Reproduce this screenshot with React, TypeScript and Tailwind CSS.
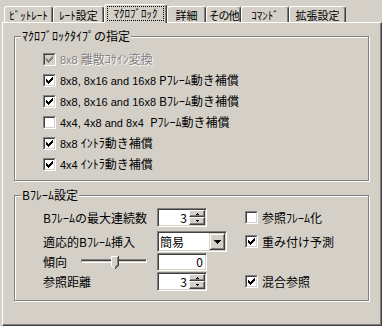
import type { ReactNode } from "react"

// classic win32 property sheet: tabs + two group boxes

const tabs = [
  { label: "ﾋﾞｯﾄﾚｰﾄ", cls: "w-[49px]" },
  { label: "ﾚｰﾄ設定", cls: "w-[51px]" },
  { label: "ﾏｸﾛﾌﾞﾛｯｸ", cls: "w-[63px]", active: true },
  { label: "詳細", cls: "w-[39px]" },
  { label: "その他", cls: "w-[35px] tracking-[-1px]" },
  { label: "ｺﾏﾝﾄﾞ", cls: "w-[48px]" },
  { label: "拡張設定", cls: "w-[57px]" },
]

function Lat({ children }: { children: ReactNode }) {
  return <span className="font-['Liberation_Sans',sans-serif] text-[11px]">{children}</span>
}

function CheckMark({ color }: { color: string }) {
  return (
    <svg width="7" height="7" viewBox="0 0 7 7" shapeRendering="crispEdges" fill={color}>
      <path d="M0 2h1v3H0zM1 3h1v3H1zM2 4h1v3H2zM3 3h1v3H3zM4 2h1v3H4zM5 1h1v3H5zM6 0h1v3H6z" />
    </svg>
  )
}

function CheckBox({ checked, disabled }: { checked?: boolean; disabled?: boolean }) {
  return (
    <span className="flex h-[13px] w-[13px] shrink-0 border border-t-[#808080] border-l-[#808080] border-r-white border-b-white">
      <span
        className={`flex h-[11px] w-[11px] items-center justify-center border border-t-[#404040] border-l-[#404040] border-r-[#d4d0c8] border-b-[#d4d0c8] ${
          disabled ? "bg-[#d4d0c8]" : "bg-white"
        }`}
      >
        {checked && <CheckMark color={disabled ? "#808080" : "#000"} />}
      </span>
    </span>
  )
}

function CheckRow({
  checked,
  disabled,
  className = "h-[21px]",
  children,
}: {
  checked?: boolean
  disabled?: boolean
  className?: string
  children: ReactNode
}) {
  return (
    <div className={`flex items-center ${className}`}>
      <CheckBox checked={checked} disabled={disabled} />
      <span
        className={`ml-[4px] whitespace-pre leading-none ${
          disabled ? "text-[#808080] [text-shadow:1px_1px_0_#fff]" : ""
        }`}
      >
        {children}
      </span>
    </div>
  )
}

function Group({ title, className, children }: { title: string; className: string; children: ReactNode }) {
  return (
    <div
      className={`relative ml-[11px] w-[355px] border border-[#808080] shadow-[inset_1px_1px_0_#fff,1px_1px_0_#fff] ${className}`}
    >
      <span className="absolute -top-[8px] left-[6px] h-[14px] bg-[#d4d0c8] px-[1px] leading-[14px]">{title}</span>
      {children}
    </div>
  )
}

const sunken =
  "border border-t-[#808080] border-l-[#808080] border-r-white border-b-white bg-white shadow-[inset_1px_1px_0_#404040,inset_-1px_-1px_0_#d4d0c8]"

function SpinButton({ up, h }: { up?: boolean; h: string }) {
  return (
    <span
      className={`flex ${h} items-center justify-center border border-t-white border-l-white border-r-[#404040] border-b-[#404040] bg-[#d4d0c8] shadow-[inset_-1px_-1px_0_#808080]`}
    >
      <svg width="3" height="2" viewBox="0 0 3 2" shapeRendering="crispEdges" fill="#000">
        <path d={up ? "M1 0h1v1H1zM0 1h3v1H0z" : "M0 0h3v1H0zM1 1h1v1H1z"} />
      </svg>
    </span>
  )
}

function Spin({ value }: { value: string }) {
  return (
    <div className={`flex h-[19px] w-[50px] p-[1px] ${sunken}`}>
      <span className="flex flex-1 items-center justify-end pr-[2px] leading-none">{value}</span>
      <span className="flex w-[16px] flex-col">
        <SpinButton up h="h-[7px]" />
        <SpinButton h="h-[8px]" />
      </span>
    </div>
  )
}

function Combo({ value }: { value: string }) {
  return (
    <div className={`flex h-[21px] w-[70px] p-[1px] ${sunken}`}>
      <span className="flex flex-1 items-center pl-[1px] leading-none">{value}</span>
      <span className="flex w-[16px] items-center justify-center border border-t-[#d4d0c8] border-l-[#d4d0c8] border-r-[#404040] border-b-[#404040] bg-[#d4d0c8] shadow-[inset_1px_1px_0_#fff,inset_-1px_-1px_0_#808080]">
        <svg width="7" height="4" viewBox="0 0 7 4" shapeRendering="crispEdges" fill="#000">
          <path d="M0 0h7v1H0zM1 1h5v1H1zM2 2h3v1H2zM3 3h1v1H3z" />
        </svg>
      </span>
    </div>
  )
}

function Slider() {
  return (
    <div className="relative ml-[14px] h-[18px] w-[66px]">
      <div className="mt-[6px] h-[4px] border border-t-[#808080] border-l-[#808080] border-r-white border-b-white bg-[#d4d0c8] shadow-[inset_0_1px_0_#404040]" />
      <svg
        className="absolute left-[30px] top-[3px]"
        width="8"
        height="13"
        viewBox="0 0 8 13"
        shapeRendering="crispEdges"
      >
        <polygon points="0,0 8,0 8,9 4,13 0,9" fill="#d4d0c8" />
        <path d="M0.5 9.5V0.5H7" stroke="#fff" fill="none" />
        <path d="M0.5 9.5L3.5 12.5" stroke="#fff" fill="none" />
        <path d="M7.5 0V9.5L4 13" stroke="#404040" fill="none" />
        <path d="M6.5 1V9L4 11.5" stroke="#808080" fill="none" />
      </svg>
    </div>
  )
}

function Label({ h, children }: { h: string; children: ReactNode }) {
  return <div className={`flex ${h} items-center leading-none`}>{children}</div>
}

export default function App() {
  return (
    <div className="h-[326px] w-[382px] overflow-hidden bg-[#d4d0c8] font-['Noto_Sans_CJK_JP',sans-serif] text-[12px] text-black">
      <div className="flex h-[22px] items-start pl-[4px] text-[11px]">
        {tabs.map((t) =>
          t.active ? (
            <div
              key={t.label}
              className={`relative z-10 mt-[4px] flex h-[19px] justify-center rounded-t-[3px] border-t border-l border-r border-t-white border-l-white border-r-[#404040] bg-[#d4d0c8] shadow-[inset_-1px_0_0_#808080] ${t.cls}`}
            >
              <span className="mt-[1px] flex h-[15px] w-[57px] items-center justify-center border border-dotted border-black leading-none">
                {t.label}
              </span>
            </div>
          ) : (
            <div
              key={t.label}
              className={`mt-[6px] flex h-[16px] items-center justify-center whitespace-nowrap rounded-t-[3px] border-t border-l border-r border-t-white border-l-white border-r-[#404040] pt-[1px] leading-none shadow-[inset_-1px_0_0_#808080] ${t.cls}`}
            >
              {t.label}
            </div>
          )
        )}
      </div>

      <div className="ml-[2px] h-[304px] w-[380px] border border-t-white border-l-white border-r-[#404040] border-b-[#404040] pt-[13px] shadow-[inset_-1px_-1px_0_#808080]">
        <Group title="ﾏｸﾛﾌﾞﾛｯｸﾀｲﾌﾟの指定" className="pl-[28px] pt-[12px] pb-[5px]">
          <CheckRow checked disabled>
            <Lat>8x8 </Lat>離散ｺｻｲﾝ変換
          </CheckRow>
          <CheckRow checked>
            <Lat>8x8, 8x16 and 16x8 </Lat>Pﾌﾚｰﾑ動き補償
          </CheckRow>
          <CheckRow checked>
            <Lat>8x8, 8x16 and 16x8 </Lat>Bﾌﾚｰﾑ動き補償
          </CheckRow>
          <CheckRow>
            <Lat>4x4, 4x8 and 8x4  </Lat>Pﾌﾚｰﾑ動き補償
          </CheckRow>
          <CheckRow checked>
            <Lat>8x8 </Lat>ｲﾝﾄﾗ動き補償
          </CheckRow>
          <CheckRow checked>
            <Lat>4x4 </Lat>ｲﾝﾄﾗ動き補償
          </CheckRow>
        </Group>

        <Group title="Bﾌﾚｰﾑ設定" className="mt-[14px] pl-[28px] pt-[12px] pb-[9px]">
          <div className="grid grid-cols-[114px_88px_1fr] grid-rows-[23px_22px_19px_19px] items-start">
            <Label h="h-[19px]">Bﾌﾚｰﾑの最大連続数</Label>
            <Spin value="3" />
            <CheckRow className="h-[19px]">参照ﾌﾚｰﾑ化</CheckRow>

            <Label h="h-[21px]">適応的Bﾌﾚｰﾑ挿入</Label>
            <Combo value="簡易" />
            <CheckRow checked className="h-[21px]">
              重み付け予測
            </CheckRow>

            <div className="flex h-[18px] items-center leading-none">
              <span>傾向</span>
              <Slider />
            </div>
            <div className={`flex h-[18px] w-[50px] items-center justify-end pr-[3px] leading-none ${sunken}`}>0</div>
            <div />

            <Label h="h-[19px]">参照距離</Label>
            <Spin value="3" />
            <CheckRow checked className="h-[19px]">
              混合参照
            </CheckRow>
          </div>
        </Group>
      </div>
    </div>
  )
}
